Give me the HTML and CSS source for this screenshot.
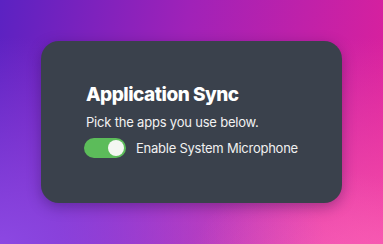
FILE: index.html
```html
<!DOCTYPE html>
<html lang="en">
<head>
    <meta charset="UTF-8">
    <meta name="viewport" content="width=device-width, initial-scale=1.0">
    <title>Application Sync</title>
    <link rel="stylesheet" href="styles.css">
</head>
<body>
    <div class="card">
        <h1>Application Sync</h1>
        <p class="subtitle">Pick the apps you use below.</p>
        <label class="toggle-row">
            <span class="toggle on"><span class="knob"></span></span>
            <span class="toggle-label">Enable System Microphone</span>
        </label>
    </div>
</body>
</html>
```

FILE: styles.css
```css
html, body {
    height: 100%;
}
body {
    margin: 0;
    font-family: Inter, "Noto Sans", sans-serif;
    display: flex;
    align-items: center;
    justify-content: center;
    overflow: hidden;
    background:
        radial-gradient(ellipse 140px 90px at 330px 260px, rgba(255,120,200,0.35) 0%, rgba(255,120,200,0) 100%),
        radial-gradient(ellipse at 0% 100%, #8c48e2 0%, rgba(140,72,226,0) 60%),
        radial-gradient(ellipse at 100% 100%, #f550ab 0%, rgba(245,80,171,0) 60%),
        linear-gradient(100deg, #5b22c2 0%, #a022b8 45%, #e0209a 100%);
}
.card {
    width: 301px;
    height: 162px;
    box-sizing: border-box;
    padding: 42px 45px 0;
    background: #3a414c;
    border-radius: 18px;
    box-shadow: 0 4px 14px rgba(30, 10, 60, 0.35);
    color: #fff;
}
h1 {
    margin: 0;
    font-size: 19px;
    font-weight: 800;
    letter-spacing: -0.5px;
    line-height: 24px;
}
.subtitle {
    margin: 7px 0 0;
    font-size: 13px;
    letter-spacing: -0.2px;
    line-height: 16px;
    color: #f2f2f2;
}
.toggle-row {
    display: flex;
    align-items: center;
    gap: 10px;
    margin: 8px 0 0 -2px;
    white-space: nowrap;
}
.toggle {
    flex: none;
    width: 42px;
    height: 20px;
    border-radius: 10px;
    background: #ccc;
    display: flex;
    align-items: center;
    padding: 2px;
    box-sizing: border-box;
}
.toggle.on {
    background: #5cbc5a;
    justify-content: flex-end;
}
.knob {
    width: 16px;
    height: 16px;
    border-radius: 50%;
    background: #f4f7f2;
}
.toggle-label {
    font-size: 13px;
    letter-spacing: -0.25px;
    color: #f0f0f0;
}
```
